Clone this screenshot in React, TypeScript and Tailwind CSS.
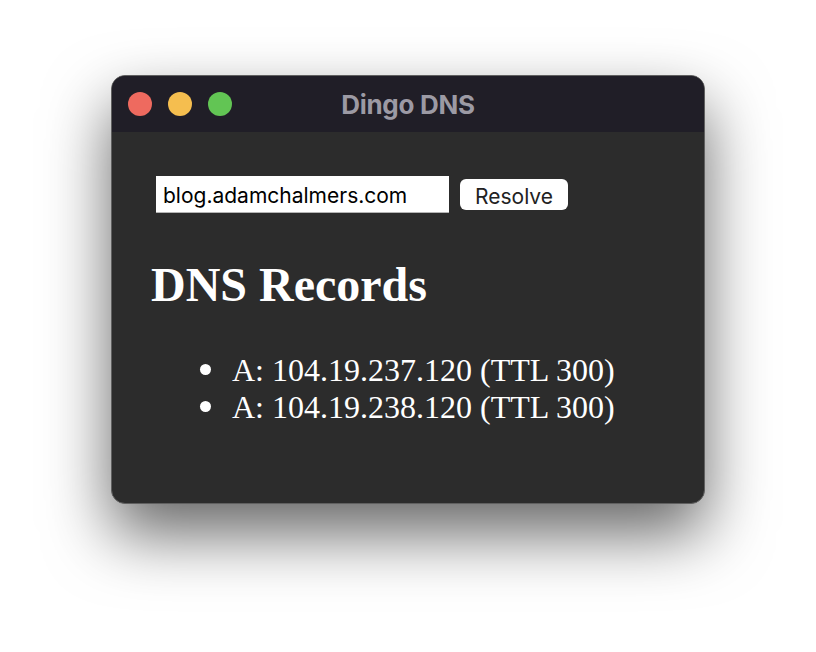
export default function App() {
  const records = [
    { type: 'A', value: '104.19.237.120', ttl: 300 },
    { type: 'A', value: '104.19.238.120', ttl: 300 },
  ];

  return (
    <div className="w-[816px] h-[652px] bg-white pt-[75px] pl-[111px]">
      <div className="w-[594px] h-[429px] rounded-[14px] border border-[#606060] overflow-hidden bg-[#2c2c2c] shadow-[0_30px_65px_rgba(0,0,0,0.6)]">
        {/* title bar */}
        <div className="relative h-[56px] bg-[#201e27] flex items-center pl-[16px]">
          <div className="flex gap-[16px]">
            <span className="w-[24px] h-[24px] rounded-full bg-[#ee6a5f]" />
            <span className="w-[24px] h-[24px] rounded-full bg-[#f5be4f]" />
            <span className="w-[24px] h-[24px] rounded-full bg-[#62c554]" />
          </div>
          <div className="absolute inset-0 flex items-center justify-center pointer-events-none">
            <span className="font-['Inter',sans-serif] font-bold text-[26px] text-[#9c9aa4] tracking-[-0.3px]">
              Dingo DNS
            </span>
          </div>
        </div>

        {/* content */}
        <div className="pt-[44px] px-[39px]">
          <div className="flex items-center ml-[5px] gap-[11px]">
            <input
              defaultValue="blog.adamchalmers.com"
              className="w-[293px] h-[37px] bg-white text-black border-b border-[#b5b5b5] px-[7px] pt-[3px] font-['Inter',sans-serif] text-[21px] outline-none"
            />
            <button className="w-[108px] h-[31px] bg-white rounded-[6px] pt-[3px] text-[#222] font-['Inter',sans-serif] text-[21px] leading-none">
              Resolve
            </button>
          </div>

          <h1 className="mt-[48px] font-['Liberation_Serif',serif] font-bold text-[48px] leading-none text-white">
            DNS Records
          </h1>

          <ul className="mt-[43px] pl-[49px] font-['Liberation_Serif',serif] text-[32px] leading-[37px] text-white">
            {records.map((r, i) => (
              <li key={i} className="flex items-center gap-[21px]">
                <span className="w-[11px] h-[11px] rounded-full bg-white mb-[2px]" />
                <span>
                  {r.type}: {r.value} (TTL {r.ttl})
                </span>
              </li>
            ))}
          </ul>
        </div>
      </div>
    </div>
  );
}
